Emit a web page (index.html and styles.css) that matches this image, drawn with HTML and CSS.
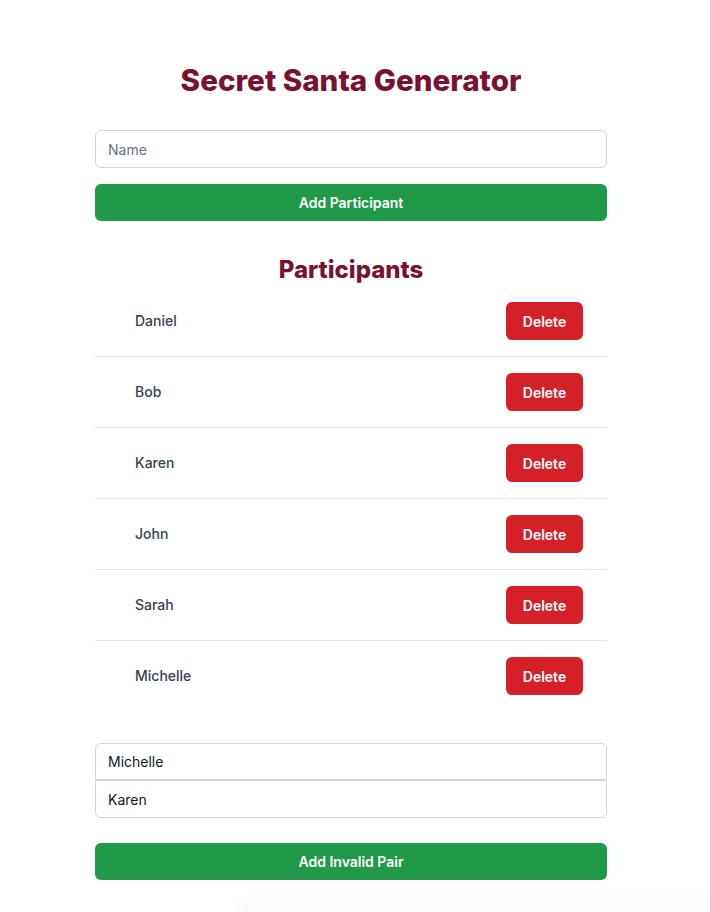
FILE: index.html
```html
<!DOCTYPE html>
<html>
<head>
<meta charset="utf-8">
<link rel="stylesheet" href="styles.css">
</head>
<body>
<div class="page">
  <main class="app">
    <h1 class="title">Secret Santa Generator</h1>
    <form class="add-form">
      <input class="field" type="text" placeholder="Name">
      <button class="btn btn-green" type="button">Add Participant</button>
    </form>
    <h2 class="subtitle">Participants</h2>
    <ul class="list">
      <li class="row"><span class="name">Daniel</span><button class="btn btn-red" type="button">Delete</button></li>
      <li class="row"><span class="name">Bob</span><button class="btn btn-red" type="button">Delete</button></li>
      <li class="row"><span class="name">Karen</span><button class="btn btn-red" type="button">Delete</button></li>
      <li class="row"><span class="name">John</span><button class="btn btn-red" type="button">Delete</button></li>
      <li class="row"><span class="name">Sarah</span><button class="btn btn-red" type="button">Delete</button></li>
      <li class="row"><span class="name">Michelle</span><button class="btn btn-red" type="button">Delete</button></li>
    </ul>
    <div class="pair">
      <div class="pair-field pair-top">Michelle</div>
      <div class="pair-field pair-bottom">Karen</div>
    </div>
    <button class="btn btn-green btn-pair" type="button">Add Invalid Pair</button>
  </main>
  <div class="next-card"></div>
</div>
</body>
</html>
```

FILE: styles.css
```css
* { box-sizing: border-box; }
html, body { margin: 0; padding: 0; background: #fff; overflow-x: hidden; }
body { font-family: Inter, "Noto Sans", sans-serif; color: #374151; }
.page { padding: 62px 0 0 95px; }
.app { width: 512px; }
.title {
  margin: 0;
  text-align: center;
  font-size: 29.6px;
  line-height: 36px;
  font-weight: 800;
  color: #7b1132;
}
.add-form { margin-top: 32px; display: flex; flex-direction: column; gap: 16px; }
.field {
  width: 100%;
  height: 38px;
  border: 1px solid #d1d5db;
  border-radius: 6px;
  padding: 0 12px;
  font-family: inherit;
  font-size: 14px;
  color: #111827;
  outline: none;
}
.field::placeholder { color: #6b7280; }
.btn {
  border: 0;
  border-radius: 6px;
  font-family: inherit;
  font-size: 14px;
  font-weight: 600;
  color: #fff;
  height: 38px;
  cursor: pointer;
}
.btn-green { background: #209a49; width: 100%; height: 37px; }
.btn-red { background: #d62027; width: 77px; }
.subtitle {
  margin: 33px 0 0;
  text-align: center;
  font-size: 24px;
  line-height: 32px;
  font-weight: 800;
  color: #7b1132;
}
.list { list-style: none; margin: 0; padding: 0; }
.row {
  display: flex;
  align-items: center;
  justify-content: space-between;
  padding: 16px 24px 16px 40px;
  border-bottom: 1px solid #e5e7eb;
  font-size: 14px;
  font-weight: 500;
  line-height: 20px;
}
.row:last-child { border-bottom: 0; }
.name { color: #374151; margin-top: -1px; }
.pair { margin-top: 32px; display: flex; flex-direction: column; }
.pair-field {
  height: 38px;
  border: 1px solid #d1d5db;
  padding: 0 12px;
  display: flex;
  align-items: center;
  font-size: 14px;
  color: #111827;
}
.pair-top { border-radius: 6px 6px 0 0; height: 37px; }
.pair-bottom { border-radius: 0 0 6px 6px; }
.btn-pair { margin-top: 25px; }
.next-card {
  margin: 32px 0 0 145px;
  width: 470px;
  height: 0;
  box-shadow: 0 -2px 20px 4px rgba(0, 0, 0, 0.05);
}
```
